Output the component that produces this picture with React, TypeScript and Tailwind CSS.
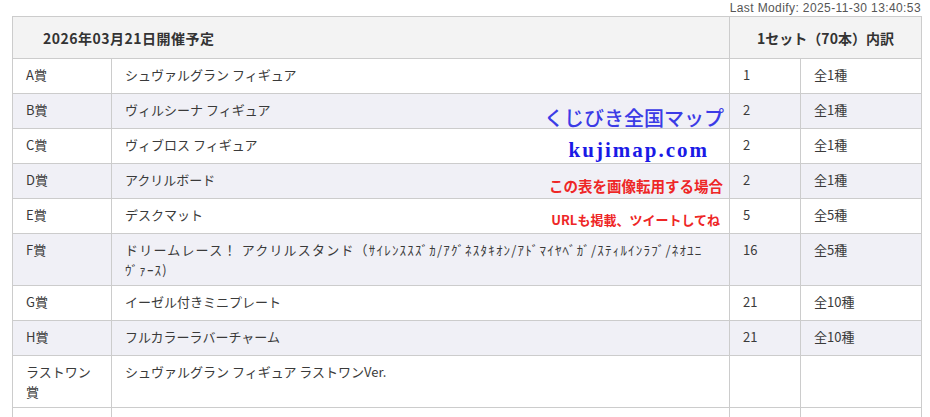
const prizes = [
  { rank: "A賞", name: "シュヴァルグラン フィギュア", count: "1", kinds: "全1種" },
  { rank: "B賞", name: "ヴィルシーナ フィギュア", count: "2", kinds: "全1種" },
  { rank: "C賞", name: "ヴィブロス フィギュア", count: "2", kinds: "全1種" },
  { rank: "D賞", name: "アクリルボード", count: "2", kinds: "全1種" },
  { rank: "E賞", name: "デスクマット", count: "5", kinds: "全5種" },
  {
    rank: "F賞",
    name: "ドリームレース！ アクリルスタンド（ｻｲﾚﾝｽｽｽﾞｶ/ｱｸﾞﾈｽﾀｷｵﾝ/ｱﾄﾞﾏｲﾔﾍﾞｶﾞ/ｽﾃｨﾙｲﾝﾗﾌﾞ/ﾈｵﾕﾆ",
    name2: "ｳﾞｧｰｽ)",
    count: "16",
    kinds: "全5種",
  },
  { rank: "G賞", name: "イーゼル付きミニプレート", count: "21", kinds: "全10種" },
  { rank: "H賞", name: "フルカラーラバーチャーム", count: "21", kinds: "全10種" },
  { rank: "ラストワン賞", name: "シュヴァルグラン フィギュア ラストワンVer.", count: "", kinds: "" },
];

export default function App() {
  return (
    <div className="w-[930px] h-[417px] overflow-hidden bg-white font-['Noto_Sans_CJK_JP',sans-serif] text-[#3a3a3a]">
      <div className="flex justify-end pr-[9px] h-4 text-[12px] leading-4 tracking-[0.4px] text-[#555] font-['Liberation_Sans',sans-serif]">
        Last Modify: 2025-11-30 13:40:53
      </div>

      <div className="relative ml-3 w-[909px]">
        <table className="w-full table-fixed border-collapse text-[13px] leading-5">
          <colgroup>
            <col className="w-[99px]" />
            <col className="w-[618px]" />
            <col className="w-[71px]" />
            <col className="w-[121px]" />
          </colgroup>
          <thead>
            <tr className="h-[42px] bg-[#f3f3f3]">
              <th colSpan={2} className="border border-[#cccccc] pl-[30px] text-left align-middle text-[14px] font-bold tracking-[0.5px] text-[#333]">
                2026年03月21日開催予定
              </th>
              <th colSpan={2} className="border border-[#cccccc] text-center align-middle text-[14px] font-bold text-[#333]">
                1セット（70本）内訳
              </th>
            </tr>
          </thead>
          <tbody>
            {prizes.map((p, i) => (
              <tr key={p.rank} className={`h-[35px] ${i % 2 === 1 ? "bg-[#f0f0f6]" : "bg-white"}`}>
                <td className="border border-[#cccccc] px-[13px] pt-[6px] pb-[5px] align-top">{p.rank}</td>
                <td className="border border-[#cccccc] px-[13px] pt-[6px] pb-[5px] align-top">
                  {p.name2 ? (
                    <span className="tracking-[1.2px]">
                      {p.name}
                      <br />
                      {p.name2}
                    </span>
                  ) : (
                    p.name
                  )}
                </td>
                <td className="border border-[#cccccc] px-[13px] pt-[6px] pb-[5px] align-top">{p.count}</td>
                <td className="border border-[#cccccc] px-[13px] pt-[6px] pb-[5px] align-top">{p.kinds}</td>
              </tr>
            ))}
            <tr className="h-[35px] bg-white">
              <td className="border border-[#cccccc]" />
              <td className="border border-[#cccccc]" />
              <td className="border border-[#cccccc]" />
              <td className="border border-[#cccccc]" />
            </tr>
          </tbody>
        </table>

        {/* watermark overlay */}
        <div className="absolute top-[92px] right-[197px] whitespace-nowrap text-[20px] leading-5 font-medium text-[#3b3be6]">
          くじびき全国マップ
        </div>
        <div className="absolute top-[124px] right-[212px] whitespace-nowrap font-['Liberation_Serif',serif] text-[21px] leading-[21px] font-bold tracking-[2px] text-[#1a1ae6]">
          kujimap.com
        </div>
        <div className="absolute top-[163px] right-[198px] whitespace-nowrap text-[14.5px] leading-none font-bold text-[#ee2626]">
          この表を画像転用する場合
        </div>
        <div className="absolute top-[197px] right-[201px] whitespace-nowrap text-[13px] leading-none font-bold text-[#ee2626]">
          URLも掲載、ツイートしてね
        </div>
      </div>
    </div>
  );
}
